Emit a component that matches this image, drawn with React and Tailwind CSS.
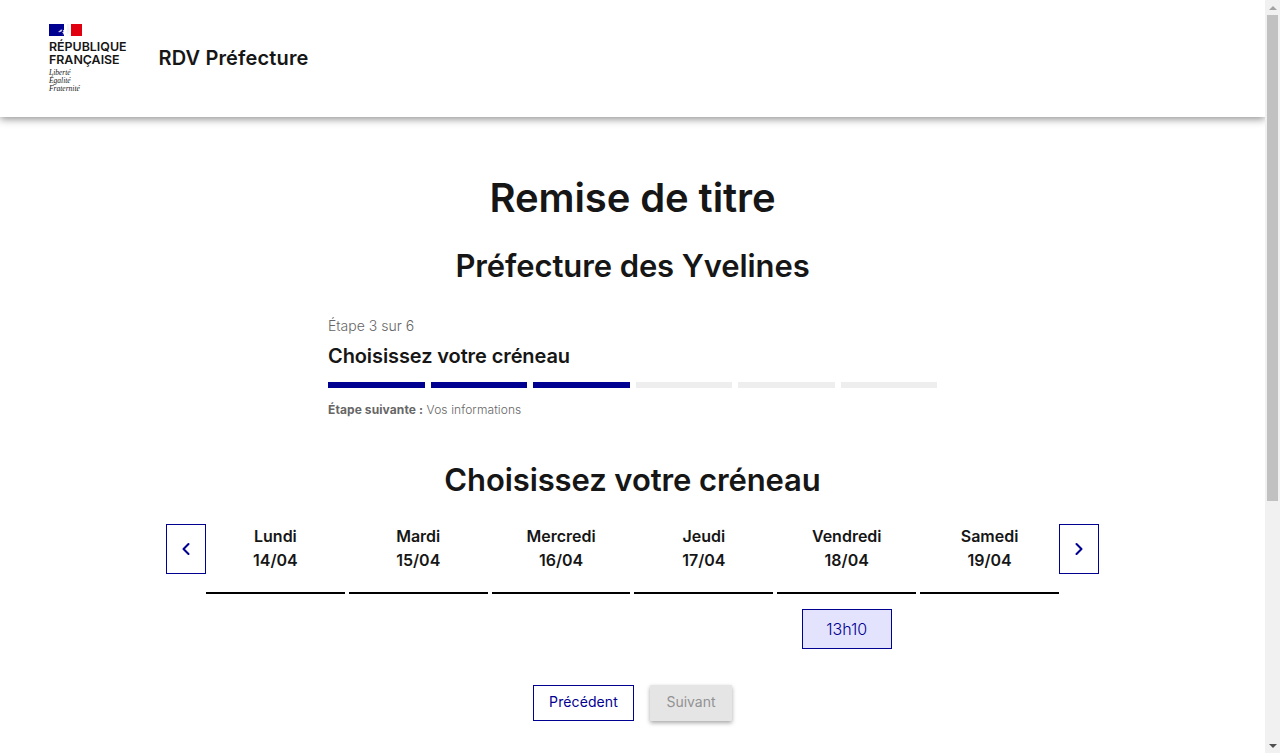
import { ChevronLeft, ChevronRight } from "lucide-react";

const days = [
  { label: "Lundi", date: "14/04" },
  { label: "Mardi", date: "15/04" },
  { label: "Mercredi", date: "16/04" },
  { label: "Jeudi", date: "17/04" },
  { label: "Vendredi", date: "18/04", slots: ["13h10"] },
  { label: "Samedi", date: "19/04" },
];

const steps = [true, true, true, false, false, false];

const Logo = () => (
  <div className="flex flex-col">
    <svg width="33" height="12" viewBox="0 0 33 12">
      <rect width="33" height="12" fill="#fff" />
      <rect width="15" height="12" fill="#000091" />
      <rect x="22" width="11" height="12" fill="#e1000f" />
      <path d="M15 0h7v12h-6.5l.5-1.5-2.5-.2 1.2-1.3-1.7-.4 1.8-1.3-1-.6 1.5-1.2L16 3.5z" fill="#fff" />
      <path d="M9 8l3-2.5 1.5.3-1 1.7-2 .8z" fill="#c9c9ea" />
      <path d="M18 0h2l-.6 2.2.8 2 1 1.4-1 .6.2 1.4-.7.6.2 1.3-1.8.5.6 2.5h-1.2z" fill="#f3f3f3" />
    </svg>
    <div className="mt-[4px] text-[12.4px] leading-[13px] font-semibold text-[#161616]">
      RÉPUBLIQUE
      <br />
      FRANÇAISE
    </div>
    <div className="mt-[3px] font-['Liberation_Serif',serif] italic text-[7.5px] leading-[8px] text-[#161616]">
      Liberté
      <br />
      Égalité
      <br />
      Fraternité
    </div>
  </div>
);

const Header = () => (
  <header className="h-[117px] flex items-center pl-[49px] bg-white shadow-[0_2px_8px_rgba(0,0,0,0.45)]">
    <Logo />
    <div className="ml-[32px] text-[20px] font-semibold tracking-[0.15px] text-[#161616] mb-[1px]">RDV Préfecture</div>
  </header>
);

const Stepper = () => (
  <div className="w-[609px] mt-[28px]">
    <div className="text-[14px] leading-[24px] font-light text-[#666666]">Étape 3 sur 6</div>
    <h3 className="mt-[4px] text-[20px] leading-[28px] font-semibold tracking-[-0.1px] text-[#161616]">
      Choisissez votre créneau
    </h3>
    <div className="mt-[12px] grid grid-cols-6 gap-[6px]">
      {steps.map((done, i) => (
        <div key={i} className={done ? "h-[6px] bg-[#000091]" : "h-[6px] bg-[#eeeeee]"} />
      ))}
    </div>
    <p className="mt-[12px] text-[12px] leading-[20px] font-light tracking-[0.1px] text-[#666666]">
      <span className="font-bold">Étape suivante :</span> Vos informations
    </p>
  </div>
);

const NavButton = ({ children }) => (
  <button className="w-[40px] h-[50px] shrink-0 flex items-center justify-center border border-[#000091] text-[#000091] bg-white">
    {children}
  </button>
);

const Calendar = () => (
  <div className="w-[933px] mt-[24px]">
    <div className="flex items-start">
      <NavButton>
        <ChevronLeft size={20} strokeWidth={2.5} />
      </NavButton>
      <div className="flex-1 grid grid-cols-6 gap-[4px]">
        {days.map((day) => (
          <div key={day.date} className="flex flex-col items-center">
            <div className="w-full h-[70px] border-b-2 border-black text-center text-[16px] leading-[24px] font-semibold text-[#161616]">
              {day.label}
              <br />
              {day.date}
            </div>
            {day.slots?.map((slot) => (
              <button
                key={slot}
                className="mt-[15px] w-[90px] h-[40px] border border-[#000091] bg-[#e3e3fd] text-[#000091] text-[16px] font-light"
              >
                {slot}
              </button>
            ))}
          </div>
        ))}
      </div>
      <NavButton>
        <ChevronRight size={20} strokeWidth={2.5} />
      </NavButton>
    </div>
  </div>
);

const Scrollbar = () => (
  <aside className="w-[15px] h-full shrink-0 flex flex-col items-center bg-[#f1f1f1]">
    <div className="h-[15px] flex items-center justify-center">
      <div className="w-0 h-0 border-x-[4px] border-x-transparent border-b-[4px] border-b-[#a3a3a3]" />
    </div>
    <div className="w-[11px] h-[486px] bg-[#c1c1c1]" />
    <div className="mt-auto h-[15px] flex items-center justify-center">
      <div className="w-0 h-0 border-x-[4px] border-x-transparent border-t-[4px] border-t-[#505050]" />
    </div>
  </aside>
);

export default function App() {
  return (
    <div className="h-[753px] flex overflow-hidden bg-white font-['Inter',sans-serif]">
      <div className="flex-1 min-w-0">
        <Header />
        <main className="flex flex-col items-center">
          <h1 className="mt-[57px] text-[40px] leading-[48px] font-semibold tracking-[-0.1px] text-[#161616]">
            Remise de titre
          </h1>
          <h2 className="mt-[24px] text-[31px] leading-[40px] font-semibold tracking-[-0.1px] text-[#161616]">
            Préfecture des Yvelines
          </h2>
          <Stepper />
          <h2 className="mt-[40px] text-[31px] leading-[40px] font-semibold tracking-[-0.1px] text-[#161616]">
            Choisissez votre créneau
          </h2>
          <Calendar />
          <div className="mt-[36px] flex gap-[16px]">
            <button className="w-[101px] h-[36px] pb-[3px] border border-[#000091] text-[#000091] text-[14px] tracking-[0.1px]">
              Précédent
            </button>
            <button className="w-[82px] h-[36px] pb-[3px] bg-[#e5e5e5] text-[#929292] text-[14px] rounded-[1px] shadow-[0_2px_4px_rgba(0,0,0,0.35)]">
              Suivant
            </button>
          </div>
        </main>
      </div>
      <Scrollbar />
    </div>
  );
}
